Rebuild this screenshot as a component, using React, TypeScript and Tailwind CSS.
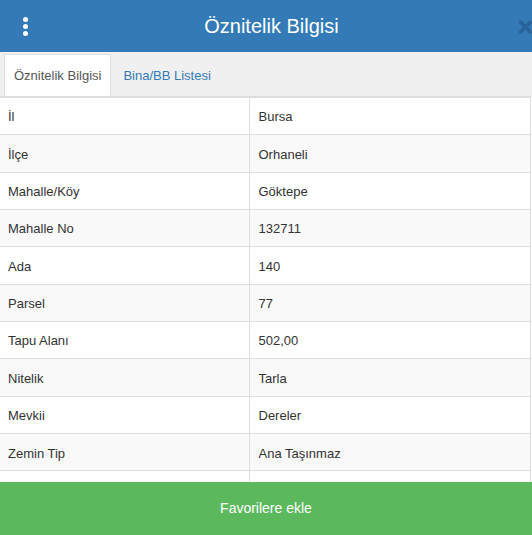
import { useState } from "react";

const rows: [string, string][] = [
  ["İl", "Bursa"],
  ["İlçe", "Orhaneli"],
  ["Mahalle/Köy", "Göktepe"],
  ["Mahalle No", "132711"],
  ["Ada", "140"],
  ["Parsel", "77"],
  ["Tapu Alanı", "502,00"],
  ["Nitelik", "Tarla"],
  ["Mevkii", "Dereler"],
  ["Zemin Tip", "Ana Taşınmaz"],
  ["", ""],
];

export default function App() {
  const [tab, setTab] = useState(0);

  return (
    <div className="h-[535px] w-[532px] flex flex-col overflow-hidden bg-white font-['Liberation_Sans',Arial,sans-serif] text-[#333]">
      {/* header */}
      <div className="h-[52px] shrink-0 bg-[#337ab7] flex items-center">
        <div className="w-[50px] flex justify-center pl-[1px]">
          <div className="flex flex-col gap-[2px] items-center">
            <span className="w-[5px] h-[5px] rounded-full bg-white" />
            <span className="w-[5px] h-[5px] rounded-full bg-white" />
            <span className="w-[5px] h-[5px] rounded-full bg-white" />
          </div>
        </div>
        <h1 className="flex-1 text-center text-white text-[20px] leading-none pr-[11px]">Öznitelik Bilgisi</h1>
        <div className="w-[28px] h-full flex items-center justify-end">
          <svg width="15" height="14" viewBox="0 0 15 14" className="-mr-[1px] mt-[2px]">
            <path d="M2.5 2 L12.5 12 M12.5 2 L2.5 12" stroke="#29639a" strokeWidth="3.6" strokeLinecap="round" />
          </svg>
        </div>
      </div>

      {/* tabs */}
      <div className="h-[45px] shrink-0 bg-[#f0f0f0] border-b border-[#ddd] flex items-end pl-[4px] text-[13px]">
        <button
          onClick={() => setTab(0)}
          className={`h-[42px] px-[9px] border border-b-0 ${tab === 0 ? "bg-white border-[#ddd] text-[#555]" : "border-transparent text-[#337ab7]"}`}
        >
          Öznitelik Bilgisi
        </button>
        <button
          onClick={() => setTab(1)}
          className={`h-[42px] px-[11px] border border-b-0 ${tab === 1 ? "bg-white border-[#ddd] text-[#555]" : "border-transparent text-[#337ab7]"}`}
        >
          Bina/BB Listesi
        </button>
      </div>

      {/* table */}
      <div className="flex-1 overflow-hidden pr-[1px]">
        <table className="w-full border-collapse border-r border-[#ddd] text-[13px]">
          <tbody>
            {rows.map(([k, v], i) => (
              <tr key={i} className={i % 2 === 1 ? "bg-[#f9f9f9]" : "bg-white"}>
                <td className="w-[249px] h-[37.35px] border border-l-0 border-[#ddd] pl-[8px] pt-[2px] align-middle">{k}</td>
                <td className="h-[37.35px] border border-[#ddd] pl-[9px] pt-[2px] align-middle">{v}</td>
              </tr>
            ))}
          </tbody>
        </table>
      </div>

      {/* footer */}
      <button className="h-[53px] shrink-0 bg-[#5cb85c] text-white text-[14px] w-full">Favorilere ekle</button>
    </div>
  );
}
